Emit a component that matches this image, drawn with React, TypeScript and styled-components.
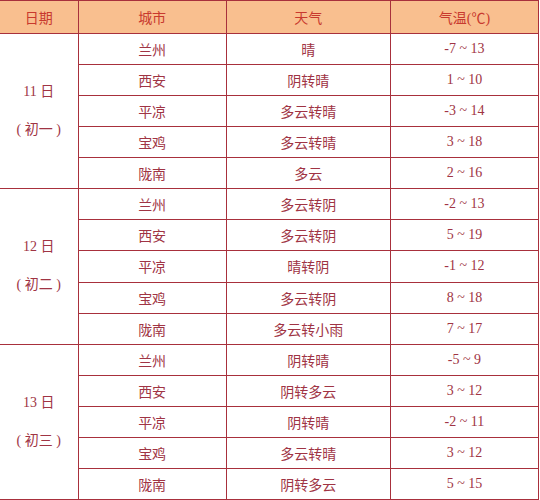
import styled, { createGlobalStyle } from "styled-components";

const GlobalStyle = createGlobalStyle`
  html, body {
    margin: 0;
    padding: 0;
    background: #ffffff;
  }
`;

const Table = styled.table`
  border-collapse: collapse;
  table-layout: fixed;
  width: 539px;
  font-family: "Liberation Serif", "Noto Sans CJK SC", serif;
  font-size: 14px;
`;

const HeadCell = styled.th`
  height: 32px;
  padding: 0;
  background: #f9bf8f;
  color: #c8392e;
  font-weight: normal;
  text-align: center;
  border: 1px solid #a8303c;
  &:first-child {
    border-left: none;
  }
`;

const Row = styled.tr`
  height: 31.07px;
`;

const Cell = styled.td`
  padding: 0;
  color: #a03444;
  text-align: center;
  vertical-align: middle;
  border: 1px solid #a8303c;
`;

const DateCell = styled(Cell)`
  border-left: none;
`;

const DateLine = styled.div`
  line-height: 38px;
  white-space: pre;
`;

type Day = {
  day: string;
  lunar: string;
  rows: [string, string, string][];
};

const days: Day[] = [
  {
    day: "11 日",
    lunar: "( 初一 )",
    rows: [
      ["兰州", "晴", "-7 ~ 13"],
      ["西安", "阴转晴", "1 ~ 10"],
      ["平凉", "多云转晴", "-3 ~ 14"],
      ["宝鸡", "多云转晴", "3 ~ 18"],
      ["陇南", "多云", "2 ~ 16"],
    ],
  },
  {
    day: "12 日",
    lunar: "( 初二 )",
    rows: [
      ["兰州", "多云转阴", "-2 ~ 13"],
      ["西安", "多云转阴", "5 ~ 19"],
      ["平凉", "晴转阴", "-1 ~ 12"],
      ["宝鸡", "多云转阴", "8 ~ 18"],
      ["陇南", "多云转小雨", "7 ~ 17"],
    ],
  },
  {
    day: "13 日",
    lunar: "( 初三 )",
    rows: [
      ["兰州", "阴转晴", "-5 ~ 9"],
      ["西安", "阴转多云", "3 ~ 12"],
      ["平凉", "阴转晴", "-2 ~ 11"],
      ["宝鸡", "多云转晴", "3 ~ 12"],
      ["陇南", "阴转多云", "5 ~ 15"],
    ],
  },
];

const App = () => (
  <>
    <GlobalStyle />
    <Table>
      <colgroup>
        <col style={{ width: 78 }} />
        <col style={{ width: 148 }} />
        <col style={{ width: 164 }} />
        <col style={{ width: 148 }} />
      </colgroup>
      <thead>
        <tr>
          <HeadCell>日期</HeadCell>
          <HeadCell>城市</HeadCell>
          <HeadCell>天气</HeadCell>
          <HeadCell>气温(℃)</HeadCell>
        </tr>
      </thead>
      <tbody>
        {days.map((d) =>
          d.rows.map(([city, weather, temp], i) => (
            <Row key={d.day + city}>
              {i === 0 && (
                <DateCell rowSpan={d.rows.length}>
                  <DateLine>{d.day}</DateLine>
                  <DateLine>{d.lunar}</DateLine>
                </DateCell>
              )}
              <Cell>{city}</Cell>
              <Cell>{weather}</Cell>
              <Cell>{temp}</Cell>
            </Row>
          ))
        )}
      </tbody>
    </Table>
  </>
);

export default App;
